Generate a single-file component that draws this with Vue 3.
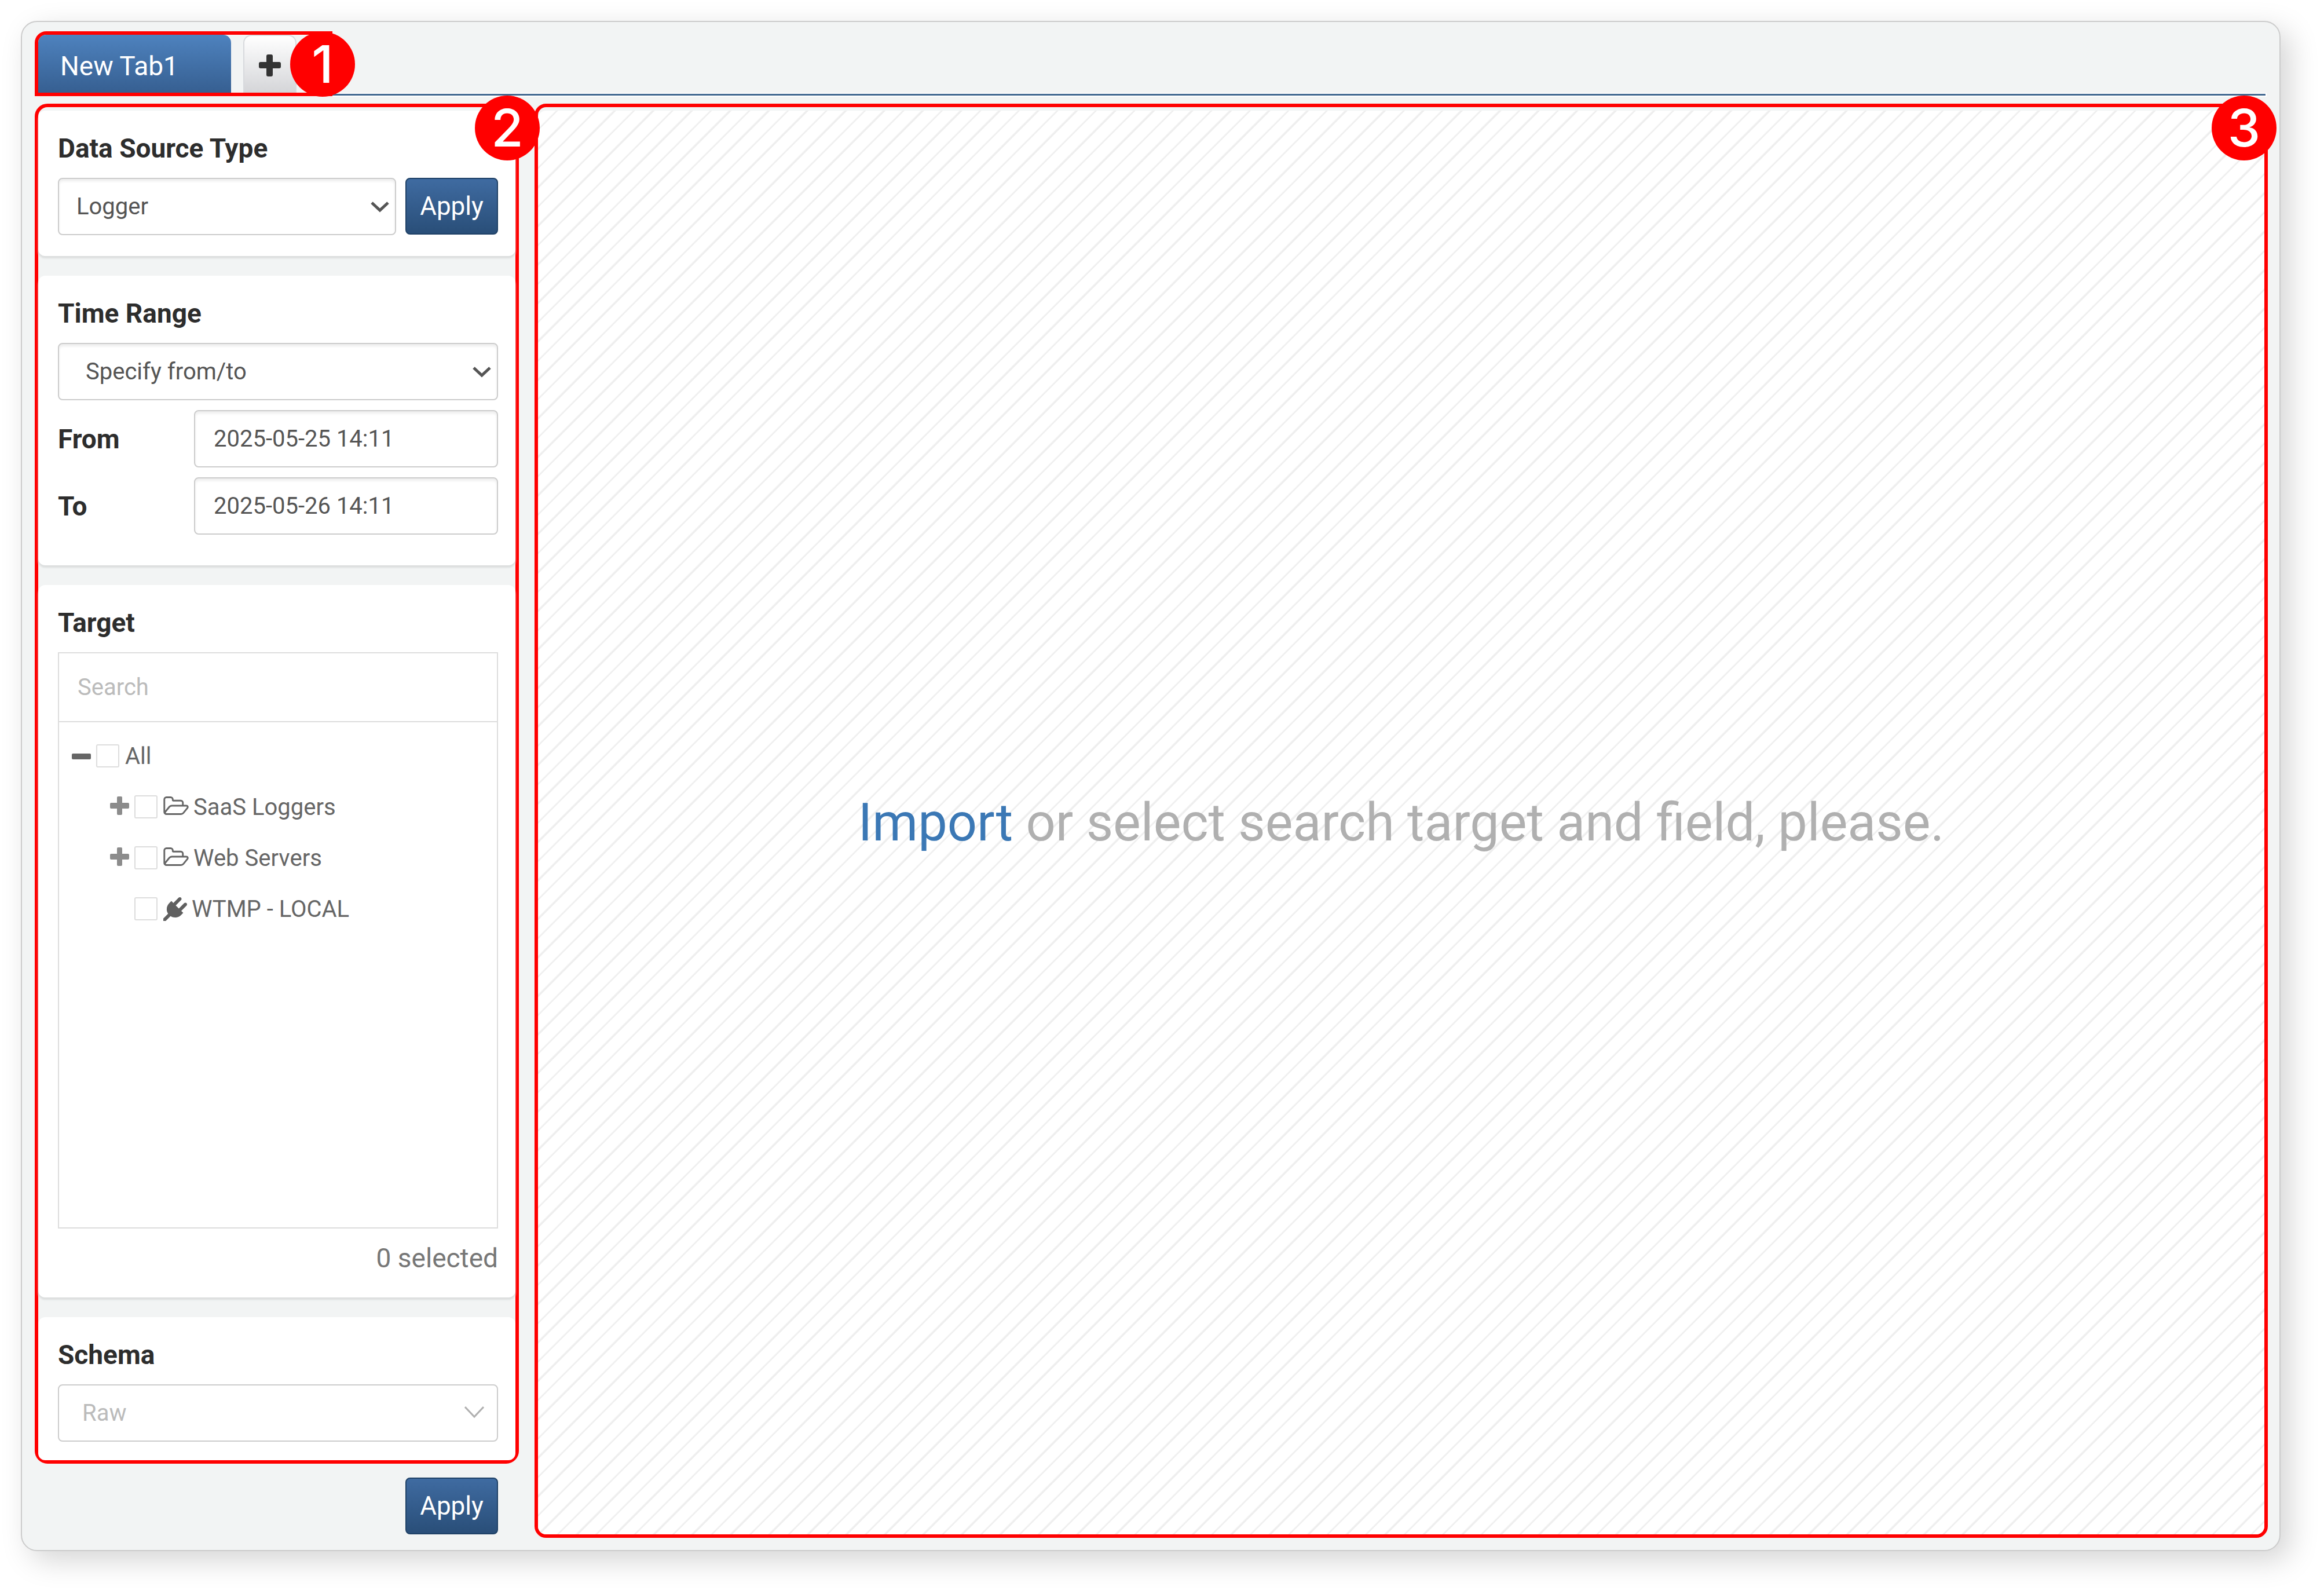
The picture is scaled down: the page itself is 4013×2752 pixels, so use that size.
<script setup>
import { ref } from 'vue'

const sourceType = ref('Logger')
const timeRange = ref('Specify from/to')
const from = ref('2025-05-25 14:11')
const to = ref('2025-05-26 14:11')
const keyword = ref('')
const schema = ref('Raw')

const nodes = [
  { id: 'saas', label: 'SaaS Loggers', icon: 'folder' },
  { id: 'web', label: 'Web Servers', icon: 'folder' },
  { id: 'wtmp', label: 'WTMP - LOCAL', icon: 'plug' },
]
</script>

<template>
  <div class="window">
    <header class="tabbar">
      <nav class="callout tabs">
        <button type="button" class="tab">New Tab1</button>
        <button type="button" class="tab-add" aria-label="Add tab">
          <svg viewBox="0 0 38 38" width="38" height="38" fill="#333">
            <rect x="13" y="0" width="11" height="38" rx="3" />
            <rect x="0" y="13" width="38" height="11" rx="3" />
          </svg>
        </button>
        <span class="badge badge-tabs">1</span>
      </nav>
      <div class="rule"></div>
    </header>

    <div class="body">
      <aside class="side">
        <div class="callout settings">
          <span class="badge">2</span>

          <section class="card card-source">
            <label class="title" for="source">Data Source Type</label>
            <div class="row">
              <div class="select grow">
                <select id="source" v-model="sourceType" class="control tight">
                  <option>Logger</option>
                </select>
                <svg class="chevron" viewBox="0 0 32 20" width="32" height="20">
                  <path d="M2 3 L16 16 L30 3" fill="none" stroke="#555" stroke-width="5" />
                </svg>
              </div>
              <button type="button" class="apply">Apply</button>
            </div>
          </section>

          <section class="card card-time">
            <label class="title" for="range">Time Range</label>
            <div class="stack">
              <div class="select">
                <select id="range" v-model="timeRange" class="control wide">
                  <option>Specify from/to</option>
                </select>
                <svg class="chevron" viewBox="0 0 32 20" width="32" height="20">
                  <path d="M2 3 L16 16 L30 3" fill="none" stroke="#555" stroke-width="5" />
                </svg>
              </div>
              <div class="field">
                <label for="from">From</label>
                <input id="from" v-model="from" type="text" class="control" />
              </div>
              <div class="field">
                <label for="to">To</label>
                <input id="to" v-model="to" type="text" class="control" />
              </div>
            </div>
          </section>

          <section class="card card-target">
            <label class="title" for="search">Target</label>
            <div class="picker">
              <input id="search" v-model="keyword" type="text" class="search" placeholder="Search" />
              <ul class="tree">
                <li class="node">
                  <svg class="toggle" viewBox="0 0 33 33" width="33" height="33" fill="#666">
                    <rect x="0" y="12" width="33" height="10" rx="2" />
                  </svg>
                  <input id="all" type="checkbox" />
                  <label for="all">All</label>
                </li>
                <li v-for="node in nodes" :key="node.id" class="node child">
                  <svg v-if="node.icon === 'folder'" class="toggle" viewBox="0 0 33 33" width="33" height="33" fill="#8c8c8c">
                    <rect x="12" y="0" width="9" height="32" rx="2" />
                    <rect x="0" y="11" width="33" height="10" rx="2" />
                  </svg>
                  <span v-else class="toggle"></span>
                  <input :id="node.id" type="checkbox" />
                  <svg v-if="node.icon === 'folder'" class="icon folder" viewBox="0 0 1909 1408" width="44" height="32" fill="#666">
                    <path d="M1781 803q0-35-53-35h-1088q-40 0-85.500 21.500t-71.500 52.500l-294 363q-18 24-18 40 0 35 53 35h1088q40 0 86-22t71-53l294-363q18-22 18-39zm-1141-163h768v-160q0-40-28-68t-68-28h-576q-40 0-68-28t-28-68v-64q0-40-28-68t-68-28h-320q-40 0-68 28t-28 68v853l256-315q44-53 116-87.500t140-34.500zm1269 163q0 62-46 120l-295 363q-43 53-116 87.500t-140 34.500h-1088q-92 0-158-66t-66-158v-960q0-92 66-158t158-66h320q92 0 158 66t66 158v32h544q92 0 158 66t66 158v160h192q54 0 99 24.500t67 70.500q15 32 15 68z" />
                  </svg>
                  <svg v-else class="icon" viewBox="0 0 1792 1792" width="41" height="41" fill="#606060">
                    <path d="M1755 453q37 38 37 90.500t-37 90.500l-401 400 150 150-160 160q-163 163-389.500 186.500t-411.500-100.500l-362 362h-181v-181l362-362q-124-185-100.500-411.500t186.500-389.500l160-160 150 150 400-401q38-37 91-37t90 37 37 90.500-37 90.500l-400 401 234 234 401-400q38-37 91-37t90 37z" />
                  </svg>
                  <label :for="node.id">{{ node.label }}</label>
                </li>
              </ul>
            </div>
            <p class="count">0 selected</p>
          </section>

          <section class="card card-schema">
            <label class="title" for="schema">Schema</label>
            <div class="select">
              <select id="schema" v-model="schema" class="control schema" disabled>
                <option>Raw</option>
              </select>
              <svg class="chevron thin" viewBox="0 0 34 22" width="34" height="22">
                <path d="M1 2 L17 19 L33 2" fill="none" stroke="#b0b0b0" stroke-width="3" />
              </svg>
            </div>
          </section>
        </div>
        <div class="footer">
          <button type="button" class="apply">Apply</button>
        </div>
      </aside>

      <main class="callout canvas">
        <span class="badge">3</span>
        <div class="hatch">
          <p class="message"><a href="#">Import</a> or select search target and field, please.</p>
        </div>
      </main>
    </div>
  </div>
</template>

<style>
body {
  margin: 0;
  background: #fff;
}
</style>

<style scoped>
* {
  box-sizing: border-box;
}

.window {
  margin: 36px 75px 75px 36px;
  padding: 16px 20px 21px 22px;
  border: 2px solid #ccc;
  border-radius: 28px;
  background: #f2f4f4;
  box-shadow: 16px 16px 50px rgba(0, 0, 0, 0.17);
  font-family: Roboto, "Liberation Sans", sans-serif;
  font-size: 40px;
  color: #555;
}

button,
input,
select {
  margin: 0;
  font-family: inherit;
}

.callout {
  position: relative;
  border: 6px solid #f00;
}

.badge {
  position: absolute;
  top: -20px;
  right: -42px;
  z-index: 2;
  width: 112px;
  height: 112px;
  border-radius: 50%;
  background: #f00;
  color: #fff;
  font: 500 90px/112px Inter, sans-serif;
  text-align: center;
}

/* Tabs */
.tabbar {
  display: flex;
  align-items: flex-end;
  padding-right: 4px;
}

.tabs {
  display: flex;
  gap: 21px;
  width: 514px;
  height: 112px;
  border-radius: 20px 0 0 0;
}

.badge-tabs {
  top: -5px;
  right: -45px;
}

.tab {
  width: 333px;
  padding: 8px 38px 0;
  border: 0;
  border-radius: 14px 14px 0 0;
  background: linear-gradient(#4e82be, #365f91);
  color: #fff;
  font-size: 46px;
  text-align: left;
}

.tab-add {
  display: flex;
  align-items: center;
  justify-content: center;
  width: 92px;
  padding: 4px 0 0;
  border: 2px solid #d8dadd;
  border-bottom: 0;
  border-radius: 14px 14px 0 0;
  background: linear-gradient(#fff, #d4d5d8);
}

.rule {
  flex: 1;
  height: 3px;
  margin-bottom: 1px;
  background: #416890;
  box-shadow: 0 0 0 2px #fff;
}

/* Panels */
.body {
  display: flex;
  gap: 27px;
  margin-top: 13px;
}

.side {
  flex: none;
  width: 836px;
}

.settings {
  display: flex;
  flex-direction: column;
  gap: 34px;
  padding-top: 6px;
  border-radius: 22px;
}

.card {
  padding: 38px 30px 0 34px;
  border-radius: 12px;
  background: #fff;
  box-shadow: 0 4px 3px #dcdede;
}

.card-source {
  padding-bottom: 36px;
}

.card-time {
  padding-bottom: 53px;
}

.card-target {
  padding-bottom: 41px;
}

.card-schema {
  padding-bottom: 32px;
  box-shadow: none;
}

.title,
.field label {
  color: #2d2d2d;
  font-size: 46px;
  font-weight: 700;
  line-height: 54px;
}

.title {
  display: block;
  margin-bottom: 24px;
}

.row {
  display: flex;
  gap: 16px;
}

.grow {
  flex: 1;
}

.stack {
  display: flex;
  flex-direction: column;
  gap: 17px;
}

.field {
  display: flex;
  align-items: center;
  justify-content: space-between;
}

.field .control {
  width: 525px;
}

.select {
  position: relative;
}

.control {
  display: block;
  width: 100%;
  height: 99px;
  padding: 0 32px;
  border: 2px solid #ccc;
  border-radius: 8px;
  background: #fff;
  box-shadow: inset 0 4px 4px #eee;
  color: #555;
  font-size: 40px;
  appearance: none;
  opacity: 1;
}

.control.tight {
  padding-left: 30px;
}

.control.wide {
  padding-left: 46px;
}

.control.schema {
  padding-left: 40px;
  box-shadow: none;
  color: #bbb;
}

.chevron {
  position: absolute;
  top: 40px;
  right: 12px;
  pointer-events: none;
}

.chevron.thin {
  top: 37px;
  right: 24px;
}

.apply {
  width: 160px;
  height: 98px;
  padding: 0;
  border: 2px solid #1f4166;
  border-radius: 8px;
  background: linear-gradient(#3f6ba1, #294e78);
  color: #fff;
  font-size: 44px;
}

.footer {
  display: flex;
  justify-content: flex-end;
  padding: 24px 36px 6px 0;
}

/* Target tree */
.picker {
  border: 2px solid #ddd;
}

.search {
  display: block;
  width: 100%;
  height: 119px;
  padding: 0 32px;
  border: 0;
  border-bottom: 2px solid #ddd;
  background: #fff;
  color: #555;
  font-size: 40px;
}

.search::placeholder {
  color: #bbb;
  opacity: 1;
}

.tree {
  min-height: 872px;
  margin: 0;
  padding: 14px 22px;
  list-style: none;
}

.node {
  display: flex;
  align-items: center;
  height: 88px;
  color: #666;
}

.child {
  padding-left: 66px;
}

.toggle {
  flex: none;
  width: 33px;
  margin-right: 9px;
}

.child .toggle,
.folder {
  margin-bottom: 4px;
}

.node input {
  width: 40px;
  height: 40px;
  margin-right: 10px;
  border: 2px solid #ddd;
  border-radius: 3px;
  background: #fff;
  appearance: none;
}

.icon {
  margin-right: 8px;
}

.count {
  margin: 24px 0 0;
  color: #777;
  font-size: 46px;
  line-height: 54px;
  text-align: right;
}

/* Result area */
.canvas {
  flex: 1;
  display: flex;
  padding-top: 6px;
  border-radius: 20px;
}

.canvas .badge {
  right: -21px;
}

.hatch {
  flex: 1;
  display: flex;
  align-items: center;
  justify-content: center;
  border-radius: 14px;
  background: repeating-linear-gradient(
    135deg,
    #eee 0 1px,
    #fff 2px 21px,
    #eee 23px 24px,
    #fff 25px 44px,
    #eee 46px 47px
  );
}

.message {
  margin: 0;
  color: #b0b0b0;
  font-size: 90px;
}

.message a {
  color: #3b78b5;
  text-decoration: none;
}
</style>
